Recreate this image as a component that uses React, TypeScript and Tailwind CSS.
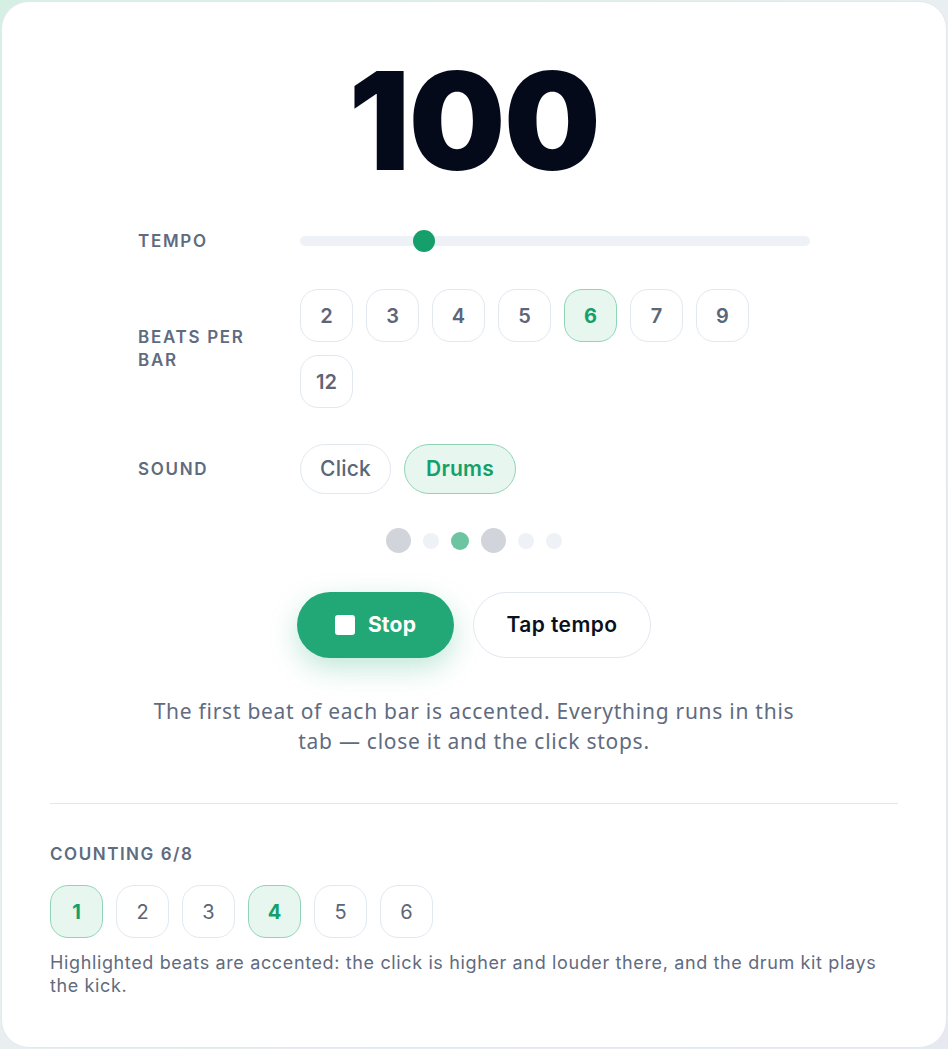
import React from "react";

const font = { fontFamily: "Inter, 'Noto Sans', sans-serif" };

export default function App() {
  const beatsOptions = [2, 3, 4, 5, 6, 7, 9, 12];
  const dots = [
    { size: "w-[25px] h-[25px]", color: "bg-[#d1d5db]" },
    { size: "w-4 h-4", color: "bg-[#eef1f6]" },
    { size: "w-[18px] h-[18px]", color: "bg-[#6cc4a0]" },
    { size: "w-[25px] h-[25px]", color: "bg-[#d1d5db]" },
    { size: "w-4 h-4", color: "bg-[#eef1f6]" },
    { size: "w-4 h-4", color: "bg-[#eef1f6]" },
  ];
  return (
    <div
      className="h-[1049px] w-[948px] p-px bg-gradient-to-br from-[#d6efe4] via-[#e9eef1] to-[#e6eaf0]"
      style={font}
    >
      <div className="h-full w-full rounded-[28px] border border-[#e3e8ee] bg-white px-[48px] pt-[51px] flex flex-col">
        <div className="text-center text-[136px] leading-none font-black tracking-[-0.01em] text-[#050a1a]">
          100
        </div>

        <div className="mx-auto w-[672px] flex flex-col">
          {/* Tempo */}
          <div className="mt-[41px] flex items-center h-[22px]">
            <div className="w-[162px] pt-[2px] text-[17px] font-semibold tracking-[0.1em] text-[#5f6b7f]">TEMPO</div>
            <div className="relative w-[510px] h-[22px] flex items-center">
              <div className="w-full h-[10px] rounded-full bg-[#eef2f7]" />
              <div className="absolute left-[113px] top-0 w-[22px] h-[22px] rounded-full bg-[#15a06b]" />
            </div>
          </div>

          {/* Beats per bar */}
          <div className="mt-[37px] flex items-center">
            <div className="w-[162px] pr-[30px] text-[17px] font-semibold tracking-[0.1em] leading-[23px] text-[#5f6b7f]">
              BEATS PER BAR
            </div>
            <div className="w-[510px] flex flex-wrap gap-[13px]">
              {beatsOptions.map((n) => (
                <div
                  key={n}
                  className={
                    n === 6
                      ? "w-[53px] h-[53px] rounded-[18px] border border-[#8fd5b5] bg-[#e7f6ef] flex items-center justify-center text-[20px] font-bold text-[#14a06a]"
                      : "w-[53px] h-[53px] rounded-[18px] border border-[#e2e8f0] bg-white flex items-center justify-center text-[20px] font-semibold text-[#5b6679]"
                  }
                >
                  {n}
                </div>
              ))}
            </div>
          </div>

          {/* Sound */}
          <div className="mt-[36px] flex items-center">
            <div className="w-[162px] pt-[2px] text-[17px] font-semibold tracking-[0.1em] text-[#5f6b7f]">SOUND</div>
            <div className="flex gap-[13px]">
              <div className="h-[50px] w-[91px] rounded-full border border-[#e2e8f0] bg-white flex items-center justify-center text-[21px] font-medium tracking-[0.01em] text-[#5b6679]">
                Click
              </div>
              <div className="h-[50px] w-[112px] rounded-full border border-[#8fd5b5] bg-[#e7f6ef] flex items-center justify-center text-[21px] font-semibold tracking-[0.01em] text-[#14a06a]">
                Drums
              </div>
            </div>
          </div>
        </div>

        {/* Dots */}
        <div className="mt-[34px] h-[25px] flex items-center justify-center gap-3">
          {dots.map((d, i) => (
            <div key={i} className={`${d.size} ${d.color} rounded-full`} />
          ))}
        </div>

        {/* Buttons */}
        <div className="mt-[39px] flex justify-center gap-[19px]">
          <div className="h-[66px] w-[157px] rounded-full bg-[#22a877] shadow-[0_10px_28px_rgba(34,168,119,0.28)] flex items-center justify-center gap-[13px] text-[21px] font-bold tracking-[0.01em] text-white">
            <div className="w-5 h-5 rounded-[3px] bg-white" />
            Stop
          </div>
          <div className="h-[66px] w-[178px] rounded-full border border-[#e2e8f0] bg-white flex items-center justify-center text-[21px] font-semibold tracking-[0.02em] text-[#0b1020]">
            Tap tempo
          </div>
        </div>

        {/* Paragraph */}
        <p
          className="mt-[38px] mx-auto w-[652px] text-center text-[21px] leading-[30px] tracking-[0.035em] text-[#5f6b7f]"
          style={{ fontFamily: "'Noto Sans', sans-serif" }}
        >
          The first beat of each bar is accented. Everything runs in this tab — close it and the click stops.
        </p>

        <div className="mt-[47px] h-px bg-[#e5e7eb]" />

        <div className="mt-[38px] text-[17px] leading-6 font-semibold tracking-[0.09em] text-[#5f6b7f]">COUNTING 6/8</div>

        <div className="mt-[19px] flex gap-[13px]">
          {[1, 2, 3, 4, 5, 6].map((n) => (
            <div
              key={n}
              className={
                n === 1 || n === 4
                  ? "w-[53px] h-[53px] rounded-[18px] border border-[#8fd5b5] bg-[#e7f6ef] flex items-center justify-center text-[20px] font-bold text-[#14a06a]"
                  : "w-[53px] h-[53px] rounded-[18px] border border-[#e2e8f0] bg-white flex items-center justify-center text-[20px] font-normal text-[#5b6679]"
              }
            >
              {n}
            </div>
          ))}
        </div>

        <p className="mt-[13px] text-[18px] leading-[23px] tracking-[0.035em] text-[#5f6b7f]">
          Highlighted beats are accented: the click is higher and louder there, and the drum kit plays the kick.
        </p>
      </div>
    </div>
  );
}
